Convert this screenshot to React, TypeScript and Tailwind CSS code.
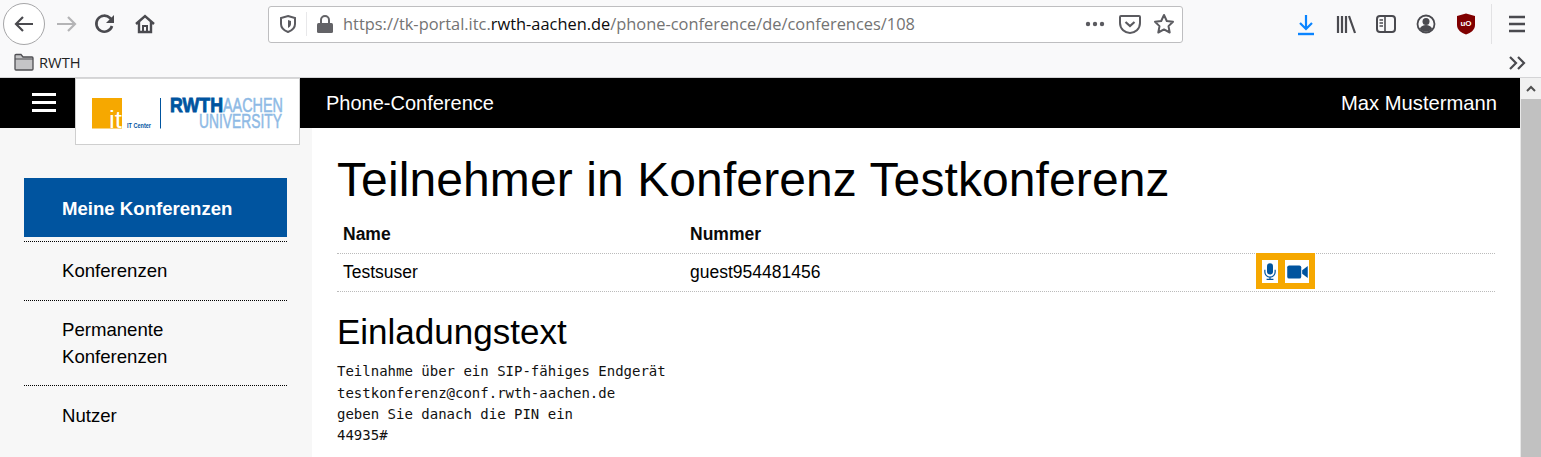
import { useState } from "react";

const sans = "font-['Liberation_Sans',Arial,sans-serif]";

function ToolbarIcon({ children, w = 24 }: { children: React.ReactNode; w?: number }) {
  return (
    <svg width={w} height="24" viewBox={`0 0 ${w} 24`} fill="none" className="shrink-0">
      {children}
    </svg>
  );
}

function BrowserChrome() {
  return (
    <div className="h-[78px] bg-[#f9f9fa] border-b border-[#d4d4d6] flex flex-col">
      <div className="h-[48px] flex items-center relative">
        <div className="ml-[3px] w-[42px] h-[42px] rounded-full bg-white border border-[#a6a6a8] flex items-center justify-center">
          <ToolbarIcon>
            <path d="M21 12H4M11 5l-7 7 7 7" stroke="#4a4a4f" strokeWidth="2.2" />
          </ToolbarIcon>
        </div>
        <div className="ml-[8px]">
          <ToolbarIcon>
            <path d="M22 12H4M15 5l7 7-7 7" stroke="#b4b4b6" strokeWidth="2.2" />
          </ToolbarIcon>
        </div>
        <div className="ml-[16px]">
          <ToolbarIcon>
            <path d="M19 14a8 8 0 1 1-2-8l3 3" stroke="#4a4a4f" strokeWidth="2.6" />
            <path d="M21 3v8h-8z" fill="#4a4a4f" />
          </ToolbarIcon>
        </div>
        <div className="ml-[16px]">
          <ToolbarIcon>
            <path d="M3 12l9-8 9 8M6 10v10h12V10" stroke="#4a4a4f" strokeWidth="2.4" />
            <path d="M10 20v-6h4v6" stroke="#4a4a4f" strokeWidth="2" />
          </ToolbarIcon>
        </div>
        <div className="ml-[111px] w-[915px] h-[37px] bg-white border border-[#bebec0] rounded-[3px] flex items-center shrink-0">
          <div className="w-[37px] h-[24px] flex items-center justify-center border-r border-[#e8e8ea] ml-[1px]">
            <svg width="18" height="20" viewBox="0 0 18 20" fill="none">
              <path d="M9 2l7 2v6c0 4-3 6.500-7 8-4-1.500-7-4-7-8V4z" stroke="#5b5b60" strokeWidth="2" />
              <path d="M9 6l3 1v3c0 2-1.500 3-3 4z" fill="#5b5b60" />
            </svg>
          </div>
          <svg width="16" height="18" viewBox="0 0 16 18" className="ml-[10px] shrink-0">
            <path d="M4 8V5a4 4 0 0 1 8 0v3" fill="none" stroke="#636367" strokeWidth="2" />
            <rect x="0" y="8" width="16" height="10" rx="1.500" fill="#636367" />
          </svg>
          <div className="ml-[10px] text-[16.4px] text-[#737373] whitespace-nowrap font-['Open_Sans',sans-serif]">
            https://tk-portal.itc.<span className="text-[#0c0c0d]">rwth-aachen.de</span>/phone-conference/de/conferences/108
          </div>
          <div className="ml-auto flex items-center">
            <svg width="20" height="6" viewBox="0 0 20 6">
              <circle cx="3" cy="3" r="2.200" fill="#5b5b60" />
              <circle cx="10" cy="3" r="2.200" fill="#5b5b60" />
              <circle cx="17" cy="3" r="2.200" fill="#5b5b60" />
            </svg>
            <svg width="22" height="22" viewBox="0 0 22 22" fill="none" className="ml-[14px]">
              <path d="M2 3h18a1 1 0 0 1 1 1v6c0 6-5 10-10 10S1 16 1 10V4a1 1 0 0 1 1-1z" stroke="#5b5b60" strokeWidth="2" />
              <path d="M6.500 9l4.500 4 4.500-4" stroke="#5b5b60" strokeWidth="2.200" />
            </svg>
            <svg width="22" height="22" viewBox="0 0 22 22" fill="none" className="ml-[12px] mr-[7px]">
              <path d="M11 2l2.800 6 6.200.8-4.500 4.300 1.200 6.400L11 16.400l-5.700 3.100 1.200-6.400L2 8.800 8.200 8z" stroke="#5b5b60" strokeWidth="2" strokeLinejoin="round" />
            </svg>
          </div>
        </div>
        <div className="ml-[111px]">
          <ToolbarIcon>
            <path d="M12 3v14M6 11l6 6 6-6" stroke="#0a84ff" strokeWidth="2.200" />
            <path d="M4 22h16" stroke="#0a84ff" strokeWidth="2.400" />
          </ToolbarIcon>
        </div>
        <div className="ml-[16px]">
          <ToolbarIcon>
            <path d="M4 4v17M8 4v17M12 4v17M15 4l6 17" stroke="#4a4a4f" strokeWidth="2.200" />
          </ToolbarIcon>
        </div>
        <div className="ml-[16px]">
          <ToolbarIcon>
            <rect x="3" y="4" width="18" height="16" rx="3" stroke="#4a4a4f" strokeWidth="2" />
            <path d="M11 4v16M5.500 8H9M5.500 11H9M5.500 14H9" stroke="#4a4a4f" strokeWidth="1.600" />
          </ToolbarIcon>
        </div>
        <div className="ml-[16px]">
          <ToolbarIcon>
            <circle cx="12" cy="12" r="8.500" stroke="#4a4a4f" strokeWidth="1.800" />
            <circle cx="12" cy="9.500" r="3.500" fill="#4a4a4f" />
            <path d="M5.800 17c1-3 3.500-4 6.200-4s5.200 1 6.200 4a8.500 8.500 0 0 1-12.400 0z" fill="#4a4a4f" />
          </ToolbarIcon>
        </div>
        <div className="ml-[16px]">
          <ToolbarIcon>
            <path d="M12 1.500l9 2.500v9c0 4.500-4 8-9 9.500-5-1.500-9-5-9-9.500V4z" fill="#800000" />
            <text x="12" y="13.500" textAnchor="middle" fontSize="8" fontWeight="700" fill="#fff" fontFamily="Liberation Sans">uO</text>
          </ToolbarIcon>
        </div>
        <div className="ml-[13px] w-px h-[40px] bg-[#e2e2e4]" />
        <div className="ml-[13px]">
          <ToolbarIcon>
            <path d="M4 5h16M4 12h16M4 19h16" stroke="#4a4a4f" strokeWidth="2.400" />
          </ToolbarIcon>
        </div>
      </div>
      <div className="h-[29px] flex items-center justify-between">
        <div className="flex items-center ml-[14px] -mt-[1px]">
          <svg width="20" height="18" viewBox="0 0 20 18" fill="none">
            <path d="M1 2.500a1 1 0 0 1 1-1h5l2 2.500h9a1 1 0 0 1 1 1V16a1 1 0 0 1-1 1H2a1 1 0 0 1-1-1z" fill="#c4c4c6" stroke="#4f4f53" strokeWidth="1.300" />
            <path d="M1 6h18" stroke="#4f4f53" strokeWidth="1" />
          </svg>
          <span className="ml-[5px] text-[14.7px] text-[#222] font-['Open_Sans',sans-serif]">RWTH</span>
        </div>
        <svg width="18" height="16" viewBox="0 0 18 16" fill="none" className="mr-[15px]">
          <path d="M2 2l6 6-6 6M10 2l6 6-6 6" stroke="#4a4a4f" strokeWidth="2.200" />
        </svg>
      </div>
    </div>
  );
}

function Logo() {
  return (
    <svg width="192" height="32" viewBox="0 0 192 32" className="block overflow-visible">
      <rect x="0" y="0" width="30" height="30.500" fill="#f6a800" />
      <text x="17" y="30" fontSize="23" fontFamily="Liberation Sans" fill="#fff" textLength="13" lengthAdjust="spacingAndGlyphs">it</text>
      <text x="35" y="30" fontSize="7" fontWeight="700" fontFamily="Liberation Sans" fill="#00549f" textLength="24" lengthAdjust="spacingAndGlyphs">IT Center</text>
      <rect x="68" y="0" width="1" height="30.500" fill="#00549f" />
      <text x="78" y="14" fontSize="19.500" fontWeight="700" fontFamily="Liberation Sans" fill="#00549f" stroke="#00549f" strokeWidth="0.800" textLength="53" lengthAdjust="spacingAndGlyphs">RWTH</text>
      <text x="131" y="14" fontSize="19.500" fontFamily="Liberation Sans" fill="#8ebae5" stroke="#8ebae5" strokeWidth="0.500" textLength="60" lengthAdjust="spacingAndGlyphs">AACHEN</text>
      <text x="107" y="30" fontSize="19.500" fontFamily="Liberation Sans" fill="#8ebae5" stroke="#8ebae5" strokeWidth="0.500" textLength="83" lengthAdjust="spacingAndGlyphs">UNIVERSITY</text>
    </svg>
  );
}

function Sidebar() {
  return (
    <aside className="w-[312px] shrink-0 bg-[#f7f7f7] pl-[24px] pr-[25px] pt-[50px] text-[18.6px] leading-[27px]">
      <div className="border-b border-dotted border-black">
        <div className="h-[59px] mb-[4px] pt-[2px] bg-[#00549f] text-white font-bold pl-[38px] flex items-center">
          Meine Konferenzen
        </div>
      </div>
      <div className="border-b border-dotted border-black pl-[38px] pt-[15px] pb-[16px]">Konferenzen</div>
      <div className="border-b border-dotted border-black pl-[38px] pt-[15px] pb-[15px]">
        <div>Permanente</div>
        <div>Konferenzen</div>
      </div>
      <div className="pl-[38px] pt-[16px]">Nutzer</div>
    </aside>
  );
}

function MediaButtons() {
  return (
    <div className="ml-[436px] self-start -mt-[1px] flex gap-[7px] bg-[#f6a800] pl-[6px] pr-[6px] pt-[7px] pb-[6px] h-[36px] w-[59px]">
      <div className="w-[16px] h-[23px] bg-white flex items-center justify-center shrink-0">
        <svg width="12" height="19" viewBox="0 0 14 20" fill="none">
          <rect x="3.500" y="0.500" width="7" height="13" rx="3.500" fill="#00549f" />
          <path d="M1 8v2.500a6 6 0 0 0 12 0V8M7 16.500V19M3 19.200h8" stroke="#00549f" strokeWidth="1.400" />
        </svg>
      </div>
      <div className="w-[24px] h-[23px] bg-white flex items-center justify-center shrink-0">
        <svg width="21" height="14" viewBox="0 0 22 15">
          <rect x="0" y="0.500" width="15" height="14" rx="2" fill="#00549f" />
          <path d="M16 5.500L22 1v13l-6-4.500z" fill="#00549f" />
        </svg>
      </div>
    </div>
  );
}

export default function App() {
  const [user] = useState("Max Mustermann");
  return (
    <div className={`w-[1541px] h-[457px] overflow-hidden bg-white ${sans} text-black`}>
      <BrowserChrome />
      <div className="flex h-[379px]">
        <div className="w-[1520px] relative flex flex-col">
          <header className="h-[50px] bg-black text-white flex items-center shrink-0">
            <div className="ml-[32px] w-[24px] flex flex-col gap-[5px] -mt-[1px]">
              <div className="h-[3px] bg-white" />
              <div className="h-[3px] bg-white" />
              <div className="h-[3px] bg-white" />
            </div>
            <div className="ml-[270px] text-[20px]">Phone-Conference</div>
            <div className="ml-auto mr-[23px] text-[20.2px]">{user}</div>
          </header>
          <div className="absolute left-[75px] top-0 w-[225px] h-[67px] bg-white border border-[#cfcfcf] border-t-[#d8d8d8] pt-[19px] pl-[16px]">
            <Logo />
          </div>
          <div className="flex flex-1 min-h-0">
            <Sidebar />
            <main className="flex-1 pl-[25px] pr-[25px]">
              <h1 className="text-[48px] tracking-[0.1px] leading-[57px] mt-[23px]">Teilnehmer in Konferenz Testkonferenz</h1>
              <div className="mt-[2px] border-b border-dotted border-[#bbb] h-[44px] flex items-center pl-[6px] font-bold text-[17.5px] text-[#0a0a0a]">
                <div className="w-[347px] pt-[6px]">Name</div>
                <div className="pt-[6px]">Nummer</div>
              </div>
              <div className="border-b border-dotted border-[#bbb] h-[38px] flex items-center pl-[6px] text-[17.5px]">
                <div className="w-[347px]">Testsuser</div>
                <div className="w-[130px]">guest954481456</div>
                <MediaButtons />
              </div>
              <h2 className="text-[35px] leading-[40px] mt-[20px]">Einladungstext</h2>
              <pre className="mt-[9.400px] text-[14px] leading-[21.300px] font-['DejaVu_Sans_Mono',monospace] text-[#111]">
                {"Teilnahme über ein SIP-fähiges Endgerät\ntestkonferenz@conf.rwth-aachen.de\ngeben Sie danach die PIN ein\n44935#"}
              </pre>
            </main>
          </div>
        </div>
        <div className="w-[21px] bg-[#f0f0f0] flex flex-col">
          <div className="h-[21px] bg-[#f1f1f1] flex items-center justify-center">
            <svg width="10" height="7" viewBox="0 0 10 7" fill="none">
              <path d="M1 6l4-4 4 4" stroke="#505050" strokeWidth="2" />
            </svg>
          </div>
          <div className="flex-1 bg-[#c1c1c1] border-l border-[#e8e8e8]" />
        </div>
      </div>
    </div>
  );
}
